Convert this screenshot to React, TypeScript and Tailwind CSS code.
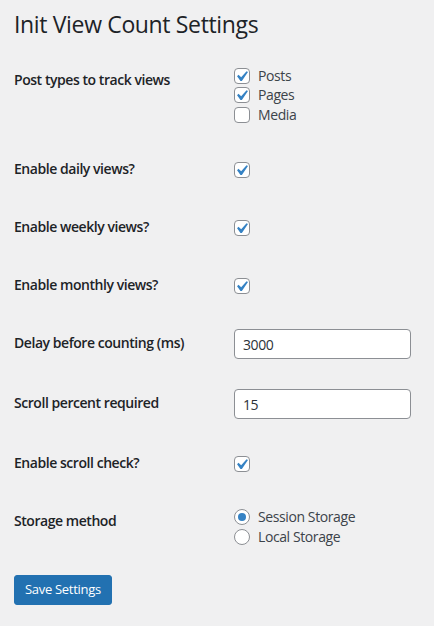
import React, { useState } from 'react';

const CheckMark: React.FC = () => (
  <svg viewBox="0 0 20 20" className="absolute -top-[3px] -left-[4px] w-[21px] h-[21px]">
    <path d="M14.83 4.89l1.34.94-5.81 8.38H9.02L5.78 9.67l1.34-1.25 2.57 2.4z" fill="#3582c4" />
  </svg>
);

const Checkbox: React.FC<{ checked: boolean; onChange: () => void }> = ({ checked, onChange }) => (
  <span
    role="checkbox"
    aria-checked={checked}
    onClick={onChange}
    className="relative block w-4 h-4 shrink-0 rounded-[4px] border border-[#8c8f94] bg-white cursor-pointer"
  >
    {checked && <CheckMark />}
  </span>
);

const Radio: React.FC<{ checked: boolean; onChange: () => void }> = ({ checked, onChange }) => (
  <span
    role="radio"
    aria-checked={checked}
    onClick={onChange}
    className="inline-flex w-4 h-4 shrink-0 items-center justify-center rounded-full border border-[#8c8f94] bg-white cursor-pointer"
  >
    {checked && <span className="w-2 h-2 rounded-full bg-[#3582c4]" />}
  </span>
);

const Row: React.FC<{ label: string; children: React.ReactNode }> = ({ label, children }) => (
  <div className="flex">
    <div className="w-[210px] shrink-0 pr-[10px] py-5 text-[14px] leading-[1.3] font-semibold tracking-[-0.45px] text-[#1d2327]">
      {label}
    </div>
    <div className="flex-1 px-[10px] py-[15px] text-[14px] leading-[1.3] tracking-[-0.4px]">{children}</div>
  </div>
);

const inputCls =
  'block w-[177px] h-[30px] px-2 rounded-[4px] border border-[#8c8f94] bg-white text-[14px] text-[#2c3338] outline-none [appearance:textfield] [&::-webkit-inner-spin-button]:appearance-none';

const App: React.FC = () => {
  const [types, setTypes] = useState({ posts: true, pages: true, media: false });
  const [daily, setDaily] = useState(true);
  const [weekly, setWeekly] = useState(true);
  const [monthly, setMonthly] = useState(true);
  const [delay, setDelay] = useState('3000');
  const [scroll, setScroll] = useState('15');
  const [scrollCheck, setScrollCheck] = useState(true);
  const [storage, setStorage] = useState<'session' | 'local'>('session');

  const font = { fontFamily: '"Open Sans", "Noto Sans", sans-serif' };

  return (
    <div className="min-h-screen bg-[#f0f0f1] text-[#3c434a] pl-[14px] pr-5 pt-px" style={font}>
      <h1 className="pt-[9px] pb-1 text-[23px] leading-[1.3] font-normal tracking-[-0.35px] text-[#1d2327]">
        Init View Count Settings
      </h1>

      <div className="mt-[7px]">
        <Row label="Post types to track views">
          {([
            ['posts', 'Posts'],
            ['pages', 'Pages'],
            ['media', 'Media'],
          ] as const).map(([key, name]) => (
            <label key={key} className="flex items-center gap-2 h-[19.6px]">
              <Checkbox
                checked={types[key]}
                onChange={() => setTypes({ ...types, [key]: !types[key] })}
              />
              <span>{name}</span>
            </label>
          ))}
        </Row>

        <Row label="Enable daily views?">
          <div className="pt-[7px]">
            <Checkbox checked={daily} onChange={() => setDaily(!daily)} />
          </div>
        </Row>

        <Row label="Enable weekly views?">
          <div className="pt-[7px]">
            <Checkbox checked={weekly} onChange={() => setWeekly(!weekly)} />
          </div>
        </Row>

        <Row label="Enable monthly views?">
          <div className="pt-[7px]">
            <Checkbox checked={monthly} onChange={() => setMonthly(!monthly)} />
          </div>
        </Row>

        <Row label="Delay before counting (ms)">
          <input type="number" value={delay} onChange={(e) => setDelay(e.target.value)} className={inputCls} />
        </Row>

        <Row label="Scroll percent required">
          <input type="number" value={scroll} onChange={(e) => setScroll(e.target.value)} className={inputCls} />
        </Row>

        <Row label="Enable scroll check?">
          <div className="pt-[7px]">
            <Checkbox checked={scrollCheck} onChange={() => setScrollCheck(!scrollCheck)} />
          </div>
        </Row>

        <Row label="Storage method">
          <label className="flex items-center gap-2 h-[19.6px]">
            <Radio checked={storage === 'session'} onChange={() => setStorage('session')} />
            <span>Session Storage</span>
          </label>
          <label className="flex items-center gap-2 h-[19.6px]">
            <Radio checked={storage === 'local'} onChange={() => setStorage('local')} />
            <span>Local Storage</span>
          </label>
        </Row>
      </div>

      <div className="mt-[13px]">
        <button className="h-[30px] px-[10px] rounded-[3px] border border-[#2271b1] bg-[#2271b1] text-white text-[13px] leading-[2.15] tracking-[-0.3px]">
          Save Settings
        </button>
      </div>
    </div>
  );
};

export default App;
